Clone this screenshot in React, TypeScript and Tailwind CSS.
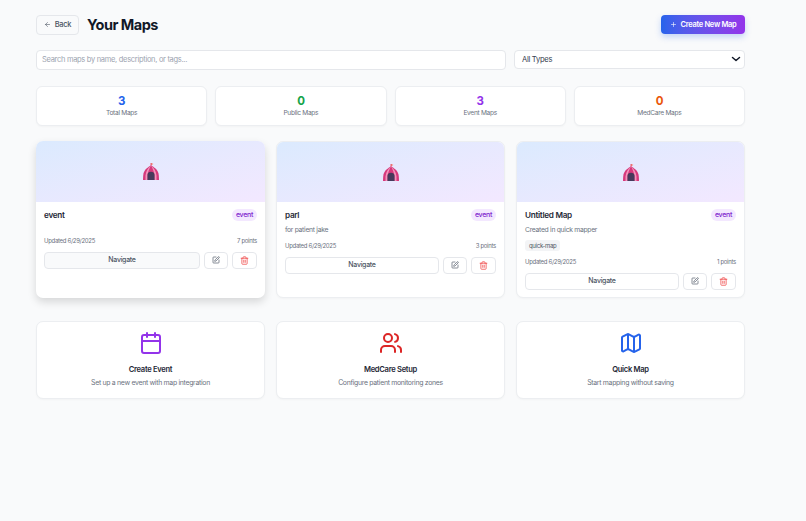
import { ArrowLeft, Calendar, Map, Plus, SquarePen, Trash2, Users } from 'lucide-react';

const stats = [
  { value: '3', label: 'Total Maps', color: 'text-[#2563eb]' },
  { value: '0', label: 'Public Maps', color: 'text-[#16a34a]' },
  { value: '3', label: 'Event Maps', color: 'text-[#9333ea]' },
  { value: '0', label: 'MedCare Maps', color: 'text-[#ea580c]' },
];

const maps = [
  { name: 'event', desc: '', tag: '', points: 7, hover: true },
  { name: 'parl', desc: 'for patient jake', tag: '', points: 3, hover: false },
  { name: 'Untitled Map', desc: 'Created in quick mapper', tag: 'quick-map', points: 1, hover: false },
];

function Tent() {
  return (
    <svg width="16" height="17" viewBox="0 0 16 17" className="mt-[1px]">
      <path d="M8 0v3" stroke="#e8567c" strokeWidth="1" />
      <path d="M8 0l2.500 1L8 2z" fill="#ef6a5a" />
      <path d="M8 2.500C5 4 1.500 6.500.5 10.500.2 12 0 14.500 0 17h16c0-2.500-.2-5-.5-6.500C14.500 6.500 11 4 8 2.500z" fill="#d6397c" />
      <path d="M8 2.500C5.500 4.500 3 8 2.500 12.500V17h2V12C5 8.500 6.500 5 8 2.500zM8 2.500c2.500 2 5 5.500 5.500 10V17h-2V12C11 8.500 9.500 5 8 2.500z" fill="#f294bb" />
      <path d="M4.500 17v-5.200C4.500 9.800 6 8.800 8 8.800s3.500 1 3.500 3V17z" fill="#463a5c" />
    </svg>
  );
}

function MapCard({ name, desc, tag, points, hover }: { name: string; desc: string; tag: string; points: number; hover: boolean }) {
  return (
    <div className={`overflow-hidden rounded-[7px] bg-white ${hover ? 'shadow-[0_4px_9px_rgba(0,0,0,0.14)]' : 'border border-[#eceef1] shadow-[0_1px_2px_rgba(0,0,0,0.03)]'}`}>
      <div className={`flex items-center justify-center bg-gradient-to-br from-[#dbeafe] to-[#f3e8ff] ${hover ? 'h-[61px]' : 'h-[60px]'}`}>
        <Tent />
      </div>
      <div className="px-[8px] pt-[7px] pb-[7px]">
        <div className="flex h-[12px] items-center justify-between">
          <span className="text-[8.200px] leading-[12px] font-semibold text-[#1f2937]">{name}</span>
          <span className="rounded-full bg-[#f3e8ff] px-[4px] text-[7px] leading-[12px] font-medium text-[#7e22ce]">event</span>
        </div>
        {desc ? (
          <div className="mt-[3px] mb-[5px] text-[6.800px] leading-[11px] text-[#6b7280]">{desc}</div>
        ) : (
          <div className="h-[9px]" />
        )}
        {tag && (
          <div className="flex">
            <span className="rounded-[3px] bg-[#f3f4f6] px-[4px] text-[6px] leading-[11px] text-[#4b5563]">{tag}</span>
          </div>
        )}
        <div className="mt-[6px] flex justify-between text-[6px] leading-[10px] text-[#6b7280]">
          <span>Updated 6/29/2025</span>
          <span>{points} points</span>
        </div>
        <div className="mt-[6px] flex gap-[4px]">
          <button className={`h-[17px] flex-1 rounded-[4px] border border-[#e5e7eb] text-[7px] font-medium text-[#4b5563] ${hover ? 'bg-[#f9fafb]' : 'bg-white'}`}>Navigate</button>
          <button className="flex h-[17px] w-[24px] items-center justify-center rounded-[4px] border border-[#e5e7eb] bg-white text-[#4b5563]">
            <SquarePen size={8} />
          </button>
          <button className="flex h-[17px] w-[25px] items-center justify-center rounded-[4px] border border-[#e5e7eb] bg-white text-[#ef4444]">
            <Trash2 size={9} />
          </button>
        </div>
      </div>
    </div>
  );
}

function QuickCard({ title, desc, icon }: { title: string; desc: string; icon: React.ReactNode }) {
  return (
    <div className="flex h-[77.500px] flex-col items-center rounded-[7px] border border-[#eceef1] bg-white pt-[9px] shadow-[0_1px_2px_rgba(0,0,0,0.03)]">
      {icon}
      <div className="mt-[9px] text-[7.600px] leading-[12px] font-semibold text-[#1f2937]">{title}</div>
      <div className="mt-[1px] text-[6.900px] leading-[12px] text-[#6b7280]">{desc}</div>
    </div>
  );
}

export default function App() {
  return (
    <div className="min-h-[521px] bg-[#f9fafb] font-['Inter',sans-serif] tracking-[-0.3px]">
      <div className="w-[745px] pt-[14.500px] pl-[36px]">
        <div className="flex h-[20px] items-center justify-between">
          <div className="flex items-center gap-[8px]">
            <button className="flex h-[20px] w-[43px] items-center justify-center gap-[4px] rounded-[4px] border border-[#e5e7eb] bg-[#f9fafb] text-[7.500px] font-medium text-[#4b5563]">
              <ArrowLeft size={7} />
              Back
            </button>
            <h1 className="text-[14.500px] leading-[20px] font-bold tracking-[-0.5px] text-[#111827]">Your Maps</h1>
          </div>
          <button className="flex h-[19px] w-[84px] items-center justify-center gap-[4px] rounded-[4px] bg-gradient-to-r from-[#2563eb] to-[#9333ea] text-[7.500px] font-semibold text-white shadow-[0_3px_6px_rgba(37,99,235,0.25)]">
            <Plus size={7} />
            Create New Map
          </button>
        </div>

        <div className="mt-[15.500px] flex items-start gap-[8px]">
          <input
            placeholder="Search maps by name, description, or tags..."
            className="h-[19.500px] w-[470px] rounded-[4px] border border-[#e5e7eb] bg-white px-[5px] text-[7.500px] outline-none placeholder:text-[#9ca3af]"
          />
          <div className="flex h-[18.500px] flex-1 items-center justify-between rounded-[4px] border border-[#e5e7eb] bg-white pr-[3px] pl-[7px] text-[7.600px] text-[#374151]">
            <span>All Types</span>
            <svg width="10" height="10" viewBox="0 0 10 10" fill="none" stroke="#111827" strokeWidth="1.500" strokeLinecap="round" strokeLinejoin="round">
              <path d="M1.500 3.500L5 6.500l3.500-3" />
            </svg>
          </div>
        </div>

        <div className="mt-[16px] grid grid-cols-4 gap-[8px]">
          {stats.map((s) => (
            <div key={s.label} className="flex h-[40px] flex-col items-center justify-center rounded-[6px] border border-[#eceef1] bg-white shadow-[0_1px_2px_rgba(0,0,0,0.03)]">
              <div className={`text-[11.500px] leading-[14px] font-bold ${s.color}`}>{s.value}</div>
              <div className="text-[6.600px] leading-[10px] text-[#6b7280]">{s.label}</div>
            </div>
          ))}
        </div>

        <div className="mt-[15px] grid grid-cols-3 gap-[11px]">
          {maps.map((m) => (
            <MapCard key={m.name} {...m} />
          ))}
        </div>

        <div className="mt-[23.500px] grid grid-cols-3 gap-[11px]">
          <QuickCard title="Create Event" desc="Set up a new event with map integration" icon={<Calendar size={24} className="text-[#9333ea]" />} />
          <QuickCard title="MedCare Setup" desc="Configure patient monitoring zones" icon={<Users size={24} className="text-[#dc2626]" />} />
          <QuickCard title="Quick Map" desc="Start mapping without saving" icon={<Map size={24} className="text-[#2563eb]" />} />
        </div>
      </div>
    </div>
  );
}
